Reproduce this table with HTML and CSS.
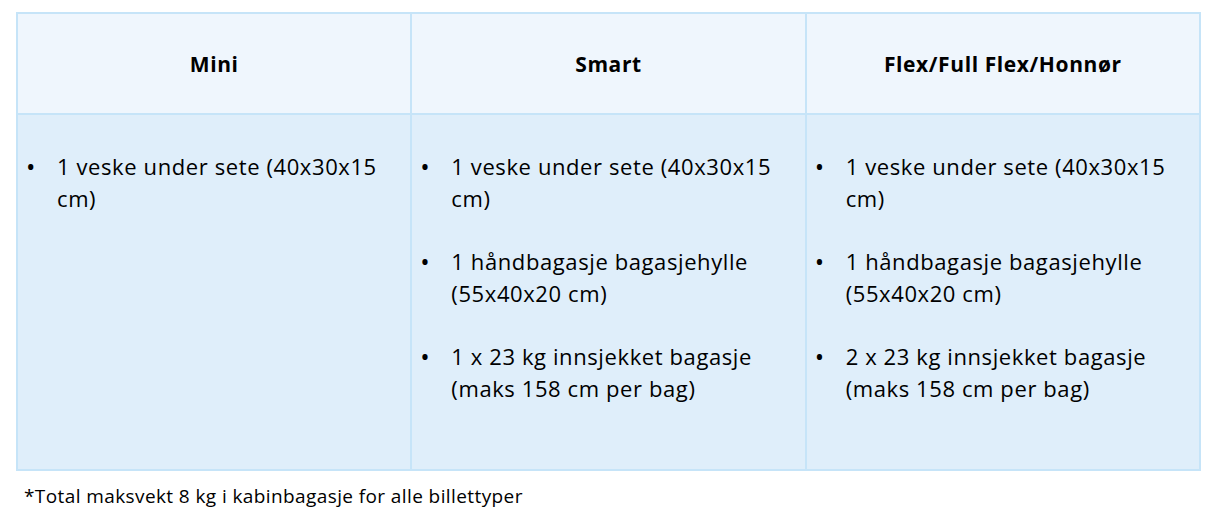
FILE: index.html
```html
<!DOCTYPE html>
<html lang="no">
<head>
<meta charset="utf-8">
<title>Bagasje</title>
<link rel="stylesheet" href="styles.css">
</head>
<body>
<div class="wrap">
  <table class="bag">
    <thead>
      <tr>
        <th>Mini</th>
        <th>Smart</th>
        <th>Flex/Full Flex/Honnør</th>
      </tr>
    </thead>
    <tbody>
      <tr>
        <td>
          <ul>
            <li><span class="dot">•</span><span class="txt">1 veske under sete (40x30x15 cm)</span></li>
          </ul>
        </td>
        <td>
          <ul>
            <li><span class="dot">•</span><span class="txt">1 veske under sete (40x30x15 cm)</span></li>
            <li><span class="dot">•</span><span class="txt">1 håndbagasje bagasjehylle (55x40x20 cm)</span></li>
            <li><span class="dot">•</span><span class="txt">1 x 23 kg innsjekket bagasje (maks 158 cm per bag)</span></li>
          </ul>
        </td>
        <td>
          <ul>
            <li><span class="dot">•</span><span class="txt">1 veske under sete (40x30x15 cm)</span></li>
            <li><span class="dot">•</span><span class="txt">1 håndbagasje bagasjehylle (55x40x20 cm)</span></li>
            <li><span class="dot">•</span><span class="txt">2 x 23 kg innsjekket bagasje (maks 158 cm per bag)</span></li>
          </ul>
        </td>
      </tr>
    </tbody>
  </table>
  <p class="note">*Total maksvekt 8 kg i kabinbagasje for alle billettyper</p>
</div>
</body>
</html>
```

FILE: styles.css
```css
html, body {
  margin: 0;
  padding: 0;
  background: #ffffff;
}

body {
  font-family: "Open Sans", "Lato", "Liberation Sans", sans-serif;
  color: #000;
}

.wrap {
  padding: 12px 23px 0 16px;
}

.bag {
  width: 1185px;
  border-collapse: collapse;
  table-layout: fixed;
}

.bag th,
.bag td {
  border: 2px solid #c6e4f8;
}

.bag th {
  height: 99px;
  background: #eff6fd;
  font-size: 21px;
  letter-spacing: 0.6px;
  font-weight: 700;
  text-align: center;
  vertical-align: middle;
  padding: 0;
}

.bag td {
  height: 319px;
  background: #dfeefa;
  vertical-align: top;
  padding: 35px 30px 0 8px;
}

.bag ul {
  list-style: none;
  margin: 0;
  padding: 0;
  display: flex;
  flex-direction: column;
  gap: 31px;
}

.bag li {
  display: flex;
  font-size: 22px;
  letter-spacing: 0.6px;
  line-height: 32px;
}

.dot {
  flex: 0 0 31px;
  font-size: 25px;
}

.txt {
  flex: 1;
}

.note {
  margin: 11px 0 0 8px;
  font-size: 19px;
  letter-spacing: 0.4px;
  line-height: 28px;
}
```
